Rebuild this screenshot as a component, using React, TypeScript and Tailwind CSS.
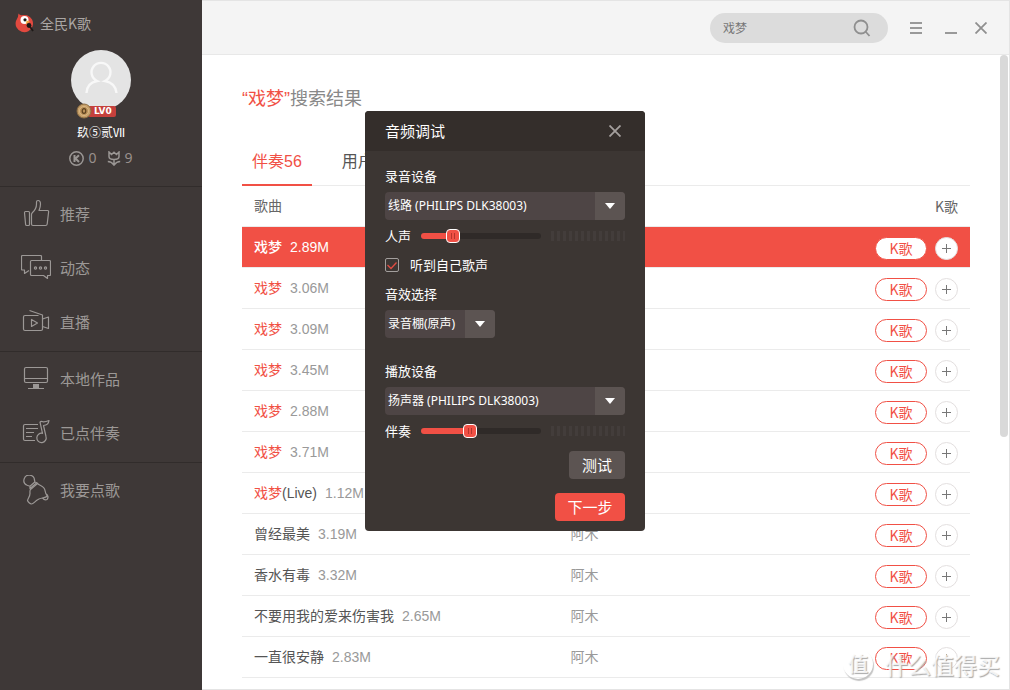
import { useState } from 'react'
import type { ReactNode } from 'react'

type Song = { match?: string; name?: string; size: string; artist?: string }

const songs: Song[] = [
  { match: '戏梦', size: '2.89M' },
  { match: '戏梦', size: '3.06M' },
  { match: '戏梦', size: '3.09M' },
  { match: '戏梦', size: '3.45M' },
  { match: '戏梦', size: '2.88M' },
  { match: '戏梦', size: '3.71M' },
  { match: '戏梦', name: '(Live)', size: '1.12M' },
  { name: '曾经最美', size: '3.19M', artist: '阿木' },
  { name: '香水有毒', size: '3.32M', artist: '阿木' },
  { name: '不要用我的爱来伤害我', size: '2.65M', artist: '阿木' },
  { name: '一直很安静', size: '2.83M', artist: '阿木' },
]

function LineIcon({ children }: { children: ReactNode }) {
  return (
    <svg viewBox="0 0 30 30" className="size-[30px] shrink-0" fill="none" stroke="#9c9896" strokeWidth="1.2" strokeLinejoin="round" aria-hidden="true">
      {children}
    </svg>
  )
}

const navGroups = [
  [
    {
      label: '推荐',
      icon: (
        <LineIcon>
          <path d="M4.5 12.5H7.5Q8.5 12.5 8.5 13.5V25.5Q8.5 26.5 7.5 26.5H5.8Q4.7 26.5 4.6 25.5L3.5 13.7Q3.5 12.5 4.5 12.5Z" />
          <path d="M10.5 15.5Q10.5 14.5 11.5 13.5Q15.5 10 15.5 5V3Q15.5 1.5 17 1.5Q19.5 1.5 19.5 5Q19.5 8 18 11.5H26.5Q27.8 11.5 27.6 13L26.2 25Q26 26.5 24.5 26.5H12Q10.5 26.5 10.5 25Z" />
        </LineIcon>
      ),
    },
    {
      label: '动态',
      icon: (
        <LineIcon>
          <path d="M20.5 7V3.5Q20.5 2.5 19.5 2.5H1.5Q.5 2.5 .5 3.5V16Q.5 17 1.5 17H3.5V20.5L8 17.5" />
          <path d="M10.5 7.5H28.5Q29.5 7.5 29.5 8.5V21.5Q29.5 22.5 28.5 22.5H26.5V25.5L22.5 22.5H10.5Q9.5 22.5 9.5 21.5V8.5Q9.5 7.5 10.5 7.5Z" />
          <circle cx="14.5" cy="15" r="1.1" />
          <circle cx="19.5" cy="15" r="1.1" />
          <circle cx="24.5" cy="15" r="1.1" />
        </LineIcon>
      ),
    },
    {
      label: '直播',
      icon: (
        <LineIcon>
          <path d="M17.5 8.5H4Q2.5 8.5 2.5 10V22Q2.5 23.5 4 23.5H20Q21.5 23.5 21.5 22V8L8.5 3.5" />
          <path d="M21.5 12L27.5 10V21.5L21.5 19.5" />
          <path d="M10.5 12.5V19.5L16.5 16Z" />
        </LineIcon>
      ),
    },
  ],
  [
    {
      label: '本地作品',
      icon: (
        <LineIcon>
          <rect x="3.5" y="3.5" width="23" height="15" rx="1.5" />
          <path d="M3.5 14.5H26.5M7 24.5H23" />
          <rect x="12" y="20" width="6" height="4.5" fill="#9c9896" stroke="none" />
        </LineIcon>
      ),
    },
    {
      label: '已点伴奏',
      icon: (
        <LineIcon>
          <path d="M17 6.5H4Q2.5 6.5 2.5 8V21Q2.5 22.5 4 22.5H14M5 10.5H17M5 14.5H13M5 18.5H11" />
          <path d="M21.5 15.3L19 4.2Q20 3 22 3.8Q24.5 4 28 2.5Q27.5 7 22.5 7.5L25 18.5A4.7 4.7 0 1 1 21.5 15.3Z" />
        </LineIcon>
      ),
    },
  ],
  [
    {
      label: '我要点歌',
      icon: (
        <LineIcon>
          <path d="M6 10.3A5.3 5.3 0 1 1 13.5 5.5" />
          <path d="M6 10.3L9 11.2L13.8 7L13.5 4.5M9 13.5L15.8 7.8M9 11.2V14.2M13.8 7L16.5 8" />
          <path d="M9.5 14.5L16.5 8.5C19 11 23.5 11 24 15.5C24.3 18.5 25 19.5 26.5 21C24 23.5 20 22.5 17 24.5C14 26 12.5 29 10.5 29C9 29 7 27 6.5 25.5C7 23 9 21.5 9 18.5C9 17 8.5 16 9.5 14.5Z" />
          <path d="M25.8 19.5Q28 22 26.3 24.2Q24 26 21.5 23" />
        </LineIcon>
      ),
    },
  ],
]

function BirdLogo() {
  return (
    <svg viewBox="0 0 19 20" className="h-5 w-[19px]" aria-hidden="true">
      <path d="M3.5 .5Q5 3 8 2L12 2.3A8.7 8.7 0 1 1 1 8Q3.5 4 3.5 .5Z" fill="#e2493f" />
      <circle cx="9.5" cy="7" r="4" fill="#fff" />
      <circle cx="10" cy="6.8" r="1.6" fill="#1d1917" />
      <path d="M11.5 7.5L15 8.5L11 11.5Z" fill="#f0a93a" />
      <circle cx="14" cy="12.5" r="2.4" fill="#1d1917" />
      <path d="M14.5 13L18 18" stroke="#1d1917" strokeWidth="1.8" />
    </svg>
  )
}

function Sidebar() {
  return (
    <aside className="w-[202px] shrink-0 bg-[#3e3837]">
      <div className="flex h-[46px] items-center gap-1.5 pl-[15px] text-sm text-[#aaa6a4]">
        <BirdLogo />
        全民K歌
      </div>
      <div className="flex h-[141px] flex-col items-center border-b border-[#312c2b] pt-1">
        <div className="relative">
          <svg viewBox="0 0 60 60" className="size-[60px]" role="img" aria-label="头像">
            <circle cx="30" cy="30" r="30" fill="#e4e4e4" />
            <path d="M15.5 43Q16 33 26 31A9.5 9.5 0 1 1 34 31Q44.5 33 45.5 43" fill="none" stroke="#f8f8f8" strokeWidth="2.4" />
          </svg>
          <div className="absolute top-[54px] left-[5px] flex h-[14px] items-center">
            <svg viewBox="0 0 16 16" className="z-10 size-4 shrink-0" aria-hidden="true">
              <circle cx="8" cy="8" r="7" fill="#c7a06a" stroke="#8d6d42" />
              <circle cx="8" cy="8" r="4.5" fill="#b98f58" stroke="#e0c08e" strokeWidth=".8" />
              <ellipse cx="8" cy="8" rx="1.8" ry="2.3" fill="none" stroke="#5d4220" strokeWidth="1.2" />
            </svg>
            <span className="-ml-1 h-[11px] rounded-xs bg-[#c5403c] pr-1 pl-1.5 font-['DejaVu_Sans'] text-[9px] leading-[11px] font-bold text-white">LV0</span>
          </div>
        </div>
        <div className="mt-3 text-xs leading-5 text-white">镹⑤贰Ⅶ</div>
        <div className="mt-1.5 flex h-5 items-center gap-1 font-['Noto_Sans'] text-sm text-[#99908d]">
          <svg viewBox="0 0 15 15" className="size-[15px]" fill="none" stroke="#9a9694" strokeWidth="1.5" aria-hidden="true">
            <circle cx="7.5" cy="7.5" r="6.7" />
            <path d="M5.5 4V11M10 4.2L6.5 7.5L10 11" strokeWidth="2" />
          </svg>
          <span className="mr-1.5">0</span>
          <svg viewBox="0 0 14 15" className="h-[15px] w-[14px]" fill="none" stroke="#9a9694" strokeWidth="1.5" aria-hidden="true">
            <path d="M2 1V5.5Q2 8.5 7 8.5Q12 8.5 12 5.5V1L9.5 3.5L7 1.2L4.5 3.5ZM7 8.5V14.5M.8 10.5Q4.5 10.5 7 14Q9.5 10.5 13.2 10.5" />
          </svg>
          <span>9</span>
        </div>
      </div>
      <nav>
        {navGroups.map((group, i) => (
          <ul key={i} className="border-b border-[#312c2b] pb-0.5 last:border-b-0">
            {group.map((item) => (
              <li key={item.label}>
                <a href="#" className="flex h-[54px] items-center gap-[9px] pl-[21px] text-[15px] text-[#9c9896]">
                  {item.icon}
                  {item.label}
                </a>
              </li>
            ))}
          </ul>
        ))}
      </nav>
    </aside>
  )
}

function TopBar() {
  const [keyword, setKeyword] = useState('戏梦')
  return (
    <header className="flex h-[54px] items-center justify-end border-b border-[#e8e8e8] bg-[#f4f4f4] pr-[22px]">
      <div className="flex h-[30px] w-[178px] items-center rounded-full bg-[#dcdcdc] pr-[17px] pl-[13px]">
        <input
          aria-label="搜索"
          value={keyword}
          onChange={(e) => setKeyword(e.target.value)}
          className="min-w-0 flex-1 text-xs text-[#777] outline-none"
        />
        <button aria-label="搜索歌曲">
          <svg viewBox="0 0 18 18" className="size-[18px]" fill="none" stroke="#8f8f8f" strokeWidth="1.8" aria-hidden="true">
            <circle cx="8" cy="8" r="6.5" />
            <path d="M12.5 12.5L16.5 17" />
          </svg>
        </button>
      </div>
      <button aria-label="菜单" className="ml-[22px]">
        <svg viewBox="0 0 12 12" className="size-3" stroke="#999" strokeWidth="2" aria-hidden="true">
          <path d="M0 1H12M0 6H12M0 11H12" />
        </svg>
      </button>
      <button aria-label="最小化" className="ml-[23px]">
        <svg viewBox="0 0 12 12" className="size-3" stroke="#999" strokeWidth="2" aria-hidden="true">
          <path d="M0 11H12" />
        </svg>
      </button>
      <button aria-label="关闭" className="ml-[18px]">
        <svg viewBox="0 0 12 12" className="size-3" stroke="#8f8f8f" strokeWidth="1.8" aria-hidden="true">
          <path d="M.5 .5L11.5 11.5M11.5 .5L.5 11.5" />
        </svg>
      </button>
    </header>
  )
}

function SongRow({ song, active }: { song: Song; active: boolean }) {
  return (
    <tr className={active ? 'bg-[#f15045] text-white' : 'text-[#999]'}>
      <td className="h-[41px] border-b border-[#ebebeb] pl-3 whitespace-nowrap">
        <span className={active ? 'font-medium' : 'text-[#f15045]'}>{song.match}</span>
        <span className="text-[#555]">{song.name}</span>
        <span className="ml-2">{song.size}</span>
      </td>
      <td className="border-b border-[#ebebeb] pl-px text-[#999]">{song.artist}</td>
      <td className="border-b border-[#ebebeb] pr-3">
        <div className="flex items-center justify-end gap-2 pt-0.5">
          <button className="h-[23px] w-[52px] rounded-full border border-[#f15045] bg-white font-['Noto_Sans_CJK_SC'] text-sm leading-5 text-[#f15045]">K歌</button>
          <button aria-label="添加" className="flex size-[23px] items-center justify-center rounded-full border border-[#e3dfdf] bg-white">
            <svg viewBox="0 0 9 9" className="size-[9px]" stroke="#777" aria-hidden="true">
              <path d="M0 4.5H9M4.5 0V9" />
            </svg>
          </button>
        </div>
      </td>
    </tr>
  )
}

function Results() {
  return (
    <section className="relative flex-1 bg-white pt-[30px] pr-[39px] pb-[11px] pl-10 font-['Liberation_Sans','Noto_Sans_CJK_SC',sans-serif]">
      <h1 className="text-lg leading-7 text-[#888]">
        <span className="text-[#f15045]">“戏梦”</span>搜索结果
      </h1>
      <div className="mt-[23px] flex h-[50px] gap-5 border-b border-[#ebebeb] text-base">
        <button className="h-[50px] border-b-2 border-[#f15045] px-2.5 pt-[3px] text-[#f15045]">伴奏56</button>
        <button className="h-[50px] border-b-2 border-transparent px-2.5 pt-[3px] text-[#555]">用户</button>
      </div>
      <table className="w-full table-fixed border-separate border-spacing-0 text-left text-sm">
        <thead>
          <tr className="text-[#666]">
            <th className="h-[41px] w-[45%] border-b border-[#ebebeb] pl-3 font-normal">歌曲</th>
            <th className="border-b border-[#ebebeb]" />
            <th className="border-b border-[#ebebeb] pr-3 text-right font-['Noto_Sans_CJK_SC'] font-normal">K歌</th>
          </tr>
        </thead>
        <tbody>
          {songs.map((song, i) => (
            <SongRow key={i} song={song} active={i === 0} />
          ))}
        </tbody>
      </table>
      {/* scroll thumb */}
      <div className="absolute top-0 right-px h-[382px] w-2 rounded-full bg-[#d9d9d9]" />
    </section>
  )
}

function Dropdown({ id, label, options, small }: { id: string; label: string; options: string[]; small?: boolean }) {
  return (
    <>
      <label htmlFor={id} className="block leading-5">{label}</label>
      <div className={small ? 'relative mt-1.5 w-[110px]' : 'relative mt-1.5'}>
        <select id={id} className="block h-7 w-full appearance-none rounded-sm bg-[#4e4545] pr-[30px] pl-[3px] font-['Noto_Sans','Noto_Sans_CJK_SC',sans-serif] text-xs text-white outline-none">
          {options.map((o) => (
            <option key={o}>{o}</option>
          ))}
        </select>
        <span className="pointer-events-none absolute inset-y-0 right-0 flex w-[30px] items-center justify-center rounded-r-sm bg-[#5c5452]">
          <svg viewBox="0 0 10 6" className="h-1.5 w-2.5" fill="#fff" aria-hidden="true">
            <path d="M0 0H10L5 6Z" />
          </svg>
        </span>
      </div>
    </>
  )
}

function Volume({ id, label, initial }: { id: string; label: string; initial: number }) {
  const [value, setValue] = useState(initial)
  return (
    <div className="mt-1.5 flex h-5 items-center">
      <label htmlFor={id} className="w-9 leading-5">{label}</label>
      <input
        id={id}
        type="range"
        value={value}
        onChange={(e) => setValue(Number(e.target.value))}
        style={{ backgroundImage: `linear-gradient(90deg, #f15045 ${value}%, transparent ${value}%)` }}
        className="h-1.5 w-[120px] appearance-none rounded-full bg-[#2f2a28] [&::-webkit-slider-thumb]:size-[14px] [&::-webkit-slider-thumb]:appearance-none [&::-webkit-slider-thumb]:rounded-[4px] [&::-webkit-slider-thumb]:border [&::-webkit-slider-thumb]:border-white [&::-webkit-slider-thumb]:bg-[#f15045] [&::-webkit-slider-thumb]:bg-[linear-gradient(90deg,transparent_4px,#b5352d_4px_5px,transparent_5px_7px,#b5352d_7px_8px,transparent_8px)] [&::-webkit-slider-thumb]:bg-size-[12px_6px] [&::-webkit-slider-thumb]:bg-center [&::-webkit-slider-thumb]:bg-no-repeat"
      />
      {/* level meter */}
      <div className="ml-2.5 h-2.5 flex-1 bg-[repeating-linear-gradient(90deg,#433d3b_0_3px,transparent_3px_6px)]" />
    </div>
  )
}

function AudioDialog() {
  const [monitor, setMonitor] = useState(true)
  return (
    <div role="dialog" aria-label="音频调试" className="w-[280px] overflow-hidden rounded-sm bg-[#3c3633] text-[13px] text-white">
      <div className="flex h-10 items-center justify-between bg-[#342e2b] pr-6 pl-5">
        <h2 className="text-[15px]">音频调试</h2>
        <button aria-label="关闭音频调试">
          <svg viewBox="0 0 12 12" className="size-3" stroke="#a5a09e" strokeWidth="1.8" aria-hidden="true">
            <path d="M.5 .5L11.5 11.5M11.5 .5L.5 11.5" />
          </svg>
        </button>
      </div>
      <div className="px-5 pt-[15px] pb-2.5">
        <Dropdown id="record" label="录音设备" options={['线路 (PHILIPS DLK38003)']} />
        <Volume id="voice" label="人声" initial={24} />
        <label className="my-[9px] flex h-5 items-center gap-[11px]">
          <span className="relative size-[14px]">
            <input
              type="checkbox"
              checked={monitor}
              onChange={(e) => setMonitor(e.target.checked)}
              className="peer block size-[14px] appearance-none rounded-xs border border-[#a39f9d]"
            />
            <svg viewBox="0 0 14 14" className="pointer-events-none absolute inset-0 hidden size-[14px] peer-checked:block" fill="none" stroke="#e24c42" strokeWidth="1.3" aria-hidden="true">
              <path d="M2.5 7L6 10.5L11.5 4.5" />
            </svg>
          </span>
          听到自己歌声
        </label>
        <Dropdown id="effect" label="音效选择" options={['录音棚(原声)']} small />
        <div className="mt-[23px]">
          <Dropdown id="play" label="播放设备" options={['扬声器 (PHILIPS DLK38003)']} />
        </div>
        <Volume id="backing" label="伴奏" initial={40} />
        <div className="mt-[10px] flex flex-col items-end gap-[14px] text-[15px]">
          <button className="h-7 w-14 rounded-sm bg-[#5c5452]">测试</button>
          <button className="h-7 w-[70px] rounded-sm bg-[#f15045]">下一步</button>
        </div>
      </div>
    </div>
  )
}

function Watermark() {
  return (
    <div className="pointer-events-none absolute right-2.5 bottom-2 flex items-center gap-3 text-white/80 [text-shadow:1px_1px_1px_#aaa]">
      <span className="flex size-[30px] items-center justify-center rounded-full text-xl leading-none font-bold shadow-[1px_2px_1px_#c4c4c4]">值</span>
      <span className="text-[23px] leading-9 font-medium">什么值得买</span>
    </div>
  )
}

function App() {
  return (
    <div className="relative flex min-h-screen font-['Noto_Sans_CJK_SC',sans-serif]">
      <Sidebar />
      <main className="flex min-w-0 flex-1 flex-col border-t border-r border-b border-[#e4e4e4]">
        <TopBar />
        <Results />
      </main>
      <div className="absolute inset-x-0 top-[111px] flex justify-center">
        <AudioDialog />
      </div>
      <Watermark />
    </div>
  )
}

export default App
